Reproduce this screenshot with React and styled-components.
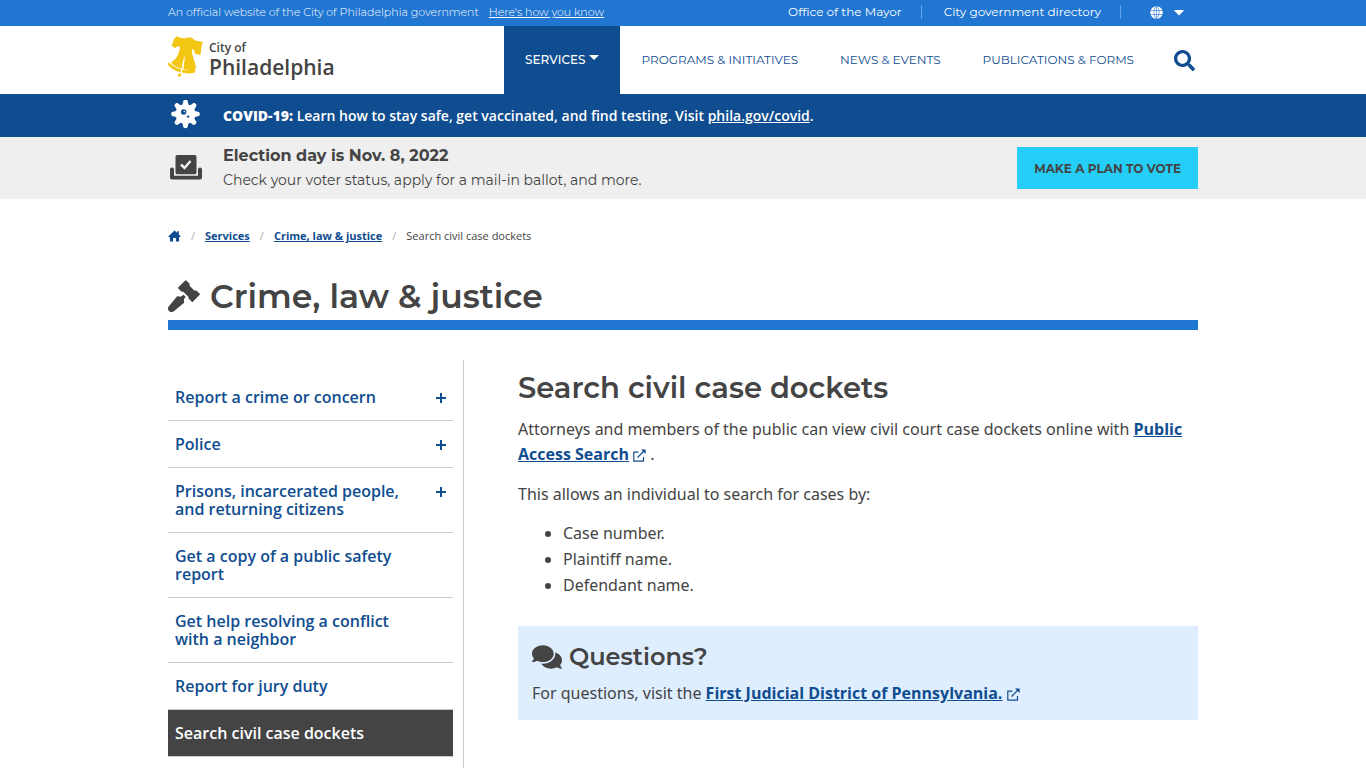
import React from 'react';
import styled, { createGlobalStyle, css } from 'styled-components';
import { FaCaretDown, FaComments, FaSearch } from 'react-icons/fa';

const heading = "Montserrat, Inter, sans-serif";
const body = "'Open Sans', sans-serif";

const GlobalStyle = createGlobalStyle`
  * {
    box-sizing: border-box;
  }
  body {
    margin: 0;
    background: #fff;
    color: #444;
    font-family: ${body};
    font-size: 16px;
  }
  h1, h2, h3, p, ul {
    margin: 0;
    padding: 0;
  }
  a {
    color: #0f4d90;
  }
  button {
    border: 0;
    background: none;
    padding: 0;
    color: inherit;
    font: inherit;
    cursor: pointer;
  }
`;

const Page = styled.div`
  min-height: 100vh;
  display: flex;
  flex-direction: column;
`;

const Container = styled.div`
  width: 100%;
  max-width: 1030px;
  margin: 0 auto;
  display: flex;
  align-items: center;
`;

const TopBar = styled.div`
  background: #2176d2;
  color: #fff;
  font-family: ${heading};
  font-size: 11px;
  a {
    color: #fff;
  }
  ${Container} {
    height: 26px;
    padding-bottom: 2px;
  }
`;

const Official = styled.span`
  font-weight: 300;
`;

const KnowLink = styled.a`
  margin-left: 10px;
  font-weight: 300;
`;

const TopLinks = styled.div`
  margin-left: auto;
  display: flex;
  align-items: center;
  font-size: 12px;
  line-height: 14px;
`;

const TopLink = styled.a`
  text-decoration: none;
  padding-right: 19px;
  margin-right: 22px;
  border-right: 1px solid #5fa3e8;
`;

const LanguageButton = styled.button`
  display: flex;
  align-items: center;
  gap: 8px;
  padding: 0 11px 0 7px;
`;

const Header = styled.header`
  ${Container} {
    height: 68px;
  }
`;

const Logo = styled.a`
  display: flex;
  gap: 6px;
  padding-bottom: 6px;
  color: #444;
  text-decoration: none;
  font-weight: 600;
`;

const LogoText = styled.div`
  padding-top: 5px;
  font-size: 12px;
  line-height: 14px;
  strong {
    display: block;
    font-size: 21px;
    font-weight: 600;
    line-height: 24px;
  }
`;

const Nav = styled.nav`
  margin-left: auto;
  display: flex;
  height: 100%;
`;

const NavItem = styled.a`
  display: flex;
  align-items: center;
  gap: 4px;
  padding: 0 21px 2px;
  font-family: ${heading};
  font-size: 12px;
  text-decoration: none;
  text-transform: uppercase;
  ${({ $active }) =>
    $active &&
    css`
      background: #0f4d90;
      color: #fff;
      font-weight: 500;
    `}
`;

const NavArrow = styled.span`
  margin-bottom: 4px;
  border: 5px solid transparent;
  border-top-color: #fff;
  border-bottom: 0;
`;

const SearchButton = styled.button`
  display: flex;
  margin: 0 3px 0 19px;
  color: #0f4d90;
`;

const CovidBar = styled.div`
  background: #0f4d90;
  color: #fff;
  font-size: 14px;
  font-weight: 600;
  a {
    color: #fff;
  }
  ${Container} {
    height: 43px;
    padding-bottom: 1px;
  }
`;

const AlertIcon = styled.div`
  width: 55px;
  display: flex;
  padding-left: 2px;
`;

const ElectionBar = styled.div`
  background: #efefef;
  font-family: ${heading};
  ${Container} {
    height: 62px;
  }
`;

const ElectionText = styled.div`
  font-size: 14px;
  line-height: 24px;
  strong {
    display: block;
    font-size: 16px;
    font-weight: 700;
  }
`;

const VoteButton = styled.button`
  margin-left: auto;
  height: 42px;
  padding: 0 17px;
  background: #25cef7;
  color: #444;
  font-family: ${heading};
  font-size: 12px;
  font-weight: 700;
  text-transform: uppercase;
`;

const Breadcrumbs = styled.nav`
  display: flex;
  align-items: center;
  gap: 10px;
  margin-top: 29px;
  font-size: 11px;
  line-height: 16px;
  a {
    display: flex;
    font-weight: 700;
    text-decoration: underline;
  }
`;

const Slash = styled.span`
  color: #aaa;
`;

const Title = styled.h1`
  display: flex;
  align-items: center;
  gap: 10px;
  margin-top: 30px;
  padding-bottom: 2px;
  border-bottom: 10px solid #2176d2;
  font-family: ${heading};
  font-size: 33px;
  font-weight: 600;
  line-height: 44px;
`;

const Wrapper = styled.div`
  width: 100%;
  max-width: 1030px;
  margin: 0 auto;
  flex: 1;
  display: flex;
  flex-direction: column;
`;

const Columns = styled.div`
  flex: 1;
  display: flex;
  margin-top: 30px;
`;

const Aside = styled.aside`
  flex: 0 0 296px;
  padding: 14px 10px 0 0;
  border-right: 1px solid #ccc;
`;

const MenuItem = styled.a`
  display: flex;
  justify-content: space-between;
  align-items: flex-start;
  padding: 14px 7px;
  border-bottom: 1px solid #ccc;
  font-weight: 600;
  line-height: 18px;
  text-decoration: none;
  ${({ $active }) =>
    $active &&
    css`
      background: #444;
      color: #fff;
    `}
`;

const MenuText = styled.span`
  flex: 0 1 235px;
`;

const PlusIcon = styled.svg`
  flex: none;
  margin-top: 5px;
`;

const Content = styled.main`
  flex: 1;
  padding: 8px 0 0 54px;
  font-family: 'Noto Sans', ${body};
`;

const PageTitle = styled.h2`
  margin-bottom: 9px;
  font-family: ${heading};
  font-size: 29px;
  font-weight: 600;
  line-height: 40px;
`;

const Paragraph = styled.p`
  margin-top: ${({ $gap }) => $gap || 0}px;
  line-height: 25px;
  a {
    font-family: ${body};
    font-weight: 700;
  }
  svg {
    color: #0f4d90;
    vertical-align: -2px;
  }
`;

const List = styled.ul`
  margin-top: 13px;
  padding-left: 45px;
  line-height: 26px;
`;

const Callout = styled.section`
  margin-top: 28px;
  padding: 14px;
  background: #deeeff;
`;

const CalloutTitle = styled.h3`
  display: flex;
  align-items: center;
  gap: 7px;
  margin-bottom: 7px;
  font-family: ${heading};
  font-size: 24px;
  font-weight: 600;
  line-height: 34px;
`;

const menu = [
  { label: 'Report a crime or concern', more: true },
  { label: 'Police', more: true },
  { label: 'Prisons, incarcerated people, and returning citizens', more: true },
  { label: 'Get a copy of a public safety report' },
  { label: 'Get help resolving a conflict with a neighbor' },
  { label: 'Report for jury duty' },
  { label: 'Search civil case dockets', active: true },
];

function BellLogo() {
  return (
    <svg width='35' height='42' viewBox='0 0 35 42' fill='#f3c613'>
      <path d='M8.500.2c2.300.9 4 2 6.500 2.100 2.800.1 4.500-1 7.500-.7 2.500.4 3.300 2.400 5.500 3.200 2 .6 4.500.1 6.800 1.300-.9 2.300-1.100 4.200-1.500 6.200-.4 2-.2 4-.9 6.700l-6-1.400c.6-2.200-.2-4.200-2.400-4.700-.6 7 3.600 13 4 19.400-1.300 2.700-8.500 1.900-12.600.8l1.600-13.600-1.700 4.600-1.800 8.700c-4-1.100-7.600-2.800-10.400-6.300 5.600-3.500 8-8.500 9-15.700-2.200-.8-4-.2-5 1.500L3.300 9.500C5 7.900 5 6.200 5.500 4.500 6 2.600 7.200 2 8.500.2z' />
      <path d='M1.200 26.400c3.200 3.400 7.300 5.700 11.800 6.900l-.5 2.900C7.500 35 3 32.600.2 28.900c-.4-1.300 0-2.100 1-2.500zM14.300 33.500c4.200.9 8 .9 11.800-.4 1.400.9 1.500 2.200.7 3.400-4.300 1.200-8.700 1.200-13.100.1zM11 37.200l2.100.5c.3 1.500-.5 3-2.200 3.400-1.300-1-1.200-2.600.1-3.900z' />
    </svg>
  );
}

function GlobeIcon() {
  return (
    <svg width='13' height='13' viewBox='0 0 13 13'>
      <circle cx='6.500' cy='6.500' r='6.300' fill='#fff' />
      <path
        d='M0 4.500h13M0 8.500h13M6.500 0v13M6.500.2C3 3 3 10 6.500 12.800M6.500.2C10 3 10 10 6.500 12.800'
        fill='none'
        stroke='#2176d2'
        strokeWidth='.6'
      />
    </svg>
  );
}

function VirusIcon() {
  return (
    <svg width='30' height='30' viewBox='-15.500 -14 30 30' fill='#fff'>
      {[0, 45, 90, 135, 180, 225, 270, 315].map((angle) => (
        <path
          key={angle}
          transform={`rotate(${angle})`}
          d='M-5-8C-3-8.800-2.500-10.500-2.300-12.600c.2-2.300 4.400-2.300 4.600 0C2.500-10.500 3-8.800 5-8z'
        />
      ))}
      <circle r='9.600' />
      <circle cx='-1.800' cy='-2' r='2.700' fill='#0f4d90' />
      <circle cx='-1.200' cy='-2.400' r='.8' />
      <circle cx='2.600' cy='2.600' r='1.200' fill='#0f4d90' />
    </svg>
  );
}

function BallotIcon() {
  return (
    <svg width='32' height='26' viewBox='0 0 32 26'>
      <path d='M2 14.500v8h28v-8' fill='none' stroke='#444' strokeWidth='4' strokeLinejoin='round' strokeLinecap='round' />
      <rect x='5.500' y='0' width='21' height='19.500' rx='2' fill='#444' />
      <path d='M4 20h24' stroke='#efefef' strokeWidth='1' />
      <path d='M11 9.500l3.500 3.500 6-7' fill='none' stroke='#efefef' strokeWidth='2.500' />
    </svg>
  );
}

function HomeIcon() {
  return (
    <svg width='13' height='12' viewBox='0 0 13 12' fill='currentColor'>
      <path d='M6.500.5L9 2.800V1.300h1.800v3.200L12.800 6.400l-.7.700h-1V11.500H7.900V8H5.100v3.500H1.900V7.100h-1L.2 6.400z' />
    </svg>
  );
}

function GavelIcon() {
  return (
    <svg width='32' height='32' viewBox='0 0 32 32' fill='currentColor' stroke='currentColor' strokeWidth='1.500' strokeLinejoin='round'>
      <path d='M17.800 1L20.800 4 20.800 6 26 11.200 28.200 11.200 31.200 14.200 24.300 21.200 21.300 18.200 21.300 16.300 15.800 10.700 13.900 10.900 10.800 7.900z' />
      <path d='M18 4.500L27.300 13.500l-4.600 4.500-9.200-9.200z' />
      <path d='M15.500 15.700l1.200 1.200-1.500 2 .2 3.400L5 30.800Q3 32 1.500 30.400T1.300 27L9.500 17l3.600.4z' />
    </svg>
  );
}

function ExternalIcon() {
  return (
    <svg width='13' height='13' viewBox='0 0 13 13' fill='none' stroke='currentColor' strokeWidth='1.200'>
      <path d='M5.500 3.200H.8v9h9.700V8M4.500 8.500l6.500-6.500' />
      <path d='M8 .4h4.600V5z' fill='currentColor' stroke='none' />
    </svg>
  );
}

function App() {
  return (
    <Page>
      <GlobalStyle />
      <TopBar>
        <Container>
          <Official>An official website of the City of Philadelphia government</Official>
          <KnowLink href='#'>Here's how you know</KnowLink>
          <TopLinks>
            <TopLink href='#'>Office of the Mayor</TopLink>
            <TopLink href='#'>City government directory</TopLink>
            <LanguageButton aria-label='Languages'>
              <GlobeIcon />
              <FaCaretDown size={16} />
            </LanguageButton>
          </TopLinks>
        </Container>
      </TopBar>
      <Header>
        <Container>
          <Logo href='#'>
            <BellLogo />
            <LogoText>
              City of
              <strong>Philadelphia</strong>
            </LogoText>
          </Logo>
          <Nav>
            <NavItem href='#' $active>
              Services
              <NavArrow />
            </NavItem>
            <NavItem href='#'>Programs &amp; initiatives</NavItem>
            <NavItem href='#'>News &amp; events</NavItem>
            <NavItem href='#'>Publications &amp; forms</NavItem>
          </Nav>
          <SearchButton aria-label='Search'>
            <FaSearch size={21} />
          </SearchButton>
        </Container>
      </Header>
      <CovidBar>
        <Container>
          <AlertIcon>
            <VirusIcon />
          </AlertIcon>
          <span>
            <b>COVID-19:</b> Learn how to stay safe, get vaccinated, and find testing. Visit <a href='#'>phila.gov/covid</a>.
          </span>
        </Container>
      </CovidBar>
      <ElectionBar>
        <Container>
          <AlertIcon>
            <BallotIcon />
          </AlertIcon>
          <ElectionText>
            <strong>Election day is Nov. 8, 2022</strong>
            Check your voter status, apply for a mail-in ballot, and more.
          </ElectionText>
          <VoteButton>Make a plan to vote</VoteButton>
        </Container>
      </ElectionBar>
      <Wrapper>
        <Breadcrumbs>
          <a href='#' aria-label='Home'>
            <HomeIcon />
          </a>
          <Slash>/</Slash>
          <a href='#'>Services</a>
          <Slash>/</Slash>
          <a href='#'>Crime, law &amp; justice</a>
          <Slash>/</Slash>
          <span>Search civil case dockets</span>
        </Breadcrumbs>
        <Title>
          <GavelIcon />
          Crime, law &amp; justice
        </Title>
        <Columns>
          <Aside>
            {menu.map(({ label, more, active }) => (
              <MenuItem key={label} href='#' $active={active}>
                <MenuText>{label}</MenuText>
                {more && (
                  <PlusIcon width='10' height='10' viewBox='0 0 10 10' stroke='currentColor' strokeWidth='2'>
                    <path d='M5 0v10M0 5h10' />
                  </PlusIcon>
                )}
              </MenuItem>
            ))}
          </Aside>
          <Content>
            <PageTitle>Search civil case dockets</PageTitle>
            <Paragraph>
              Attorneys and members of the public can view civil court case dockets online with{' '}
              <a href='#'>Public Access Search</a> <ExternalIcon /> .
            </Paragraph>
            <Paragraph $gap={15}>This allows an individual to search for cases by:</Paragraph>
            <List>
              <li>Case number.</li>
              <li>Plaintiff name.</li>
              <li>Defendant name.</li>
            </List>
            <Callout>
              <CalloutTitle>
                <FaComments size={30} />
                Questions?
              </CalloutTitle>
              <Paragraph>
                For questions, visit the <a href='#'>First Judicial District of Pennsylvania.</a> <ExternalIcon />
              </Paragraph>
            </Callout>
          </Content>
        </Columns>
      </Wrapper>
    </Page>
  );
}

export default App;
